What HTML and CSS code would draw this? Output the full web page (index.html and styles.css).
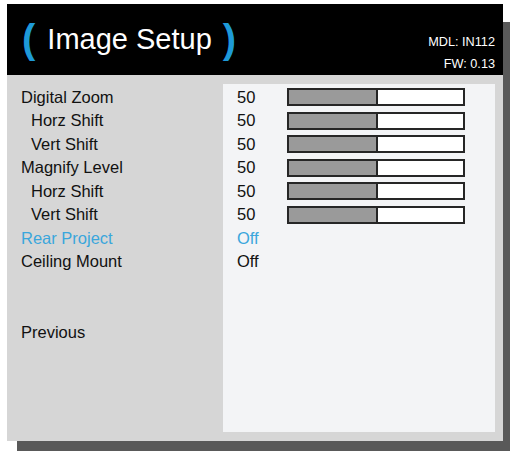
FILE: index.html
```html
<!DOCTYPE html>
<html lang="en">
<head>
  <meta charset="UTF-8">
  <title>Image Setup</title>
  <link rel="stylesheet" href="styles.css">
</head>
<body>
  <div class="osd">
    <!-- header -->
    <div class="header">
      <div class="title">
        <span class="paren">(</span>
        <span class="title-text">Image Setup</span>
        <span class="paren">)</span>
      </div>
      <div class="info">
        <div>MDL: IN112</div>
        <div>FW: 0.13</div>
      </div>
    </div>

    <!-- menu -->
    <div class="menu">
      <div class="labels">
        <div class="row">Digital Zoom</div>
        <div class="row sub">Horz Shift</div>
        <div class="row sub">Vert Shift</div>
        <div class="row">Magnify Level</div>
        <div class="row sub">Horz Shift</div>
        <div class="row sub">Vert Shift</div>
        <div class="row active">Rear Project</div>
        <div class="row">Ceiling Mount</div>
        <div class="row"></div>
        <div class="row"></div>
        <div class="row">Previous</div>
      </div>
      <div class="values">
        <div class="row"><span class="num">50</span><div class="bar"><div class="fill" style="width: 50%"></div></div></div>
        <div class="row"><span class="num">50</span><div class="bar"><div class="fill" style="width: 50%"></div></div></div>
        <div class="row"><span class="num">50</span><div class="bar"><div class="fill" style="width: 50%"></div></div></div>
        <div class="row"><span class="num">50</span><div class="bar"><div class="fill" style="width: 50%"></div></div></div>
        <div class="row"><span class="num">50</span><div class="bar"><div class="fill" style="width: 50%"></div></div></div>
        <div class="row"><span class="num">50</span><div class="bar"><div class="fill" style="width: 50%"></div></div></div>
        <div class="row active"><span class="num">Off</span></div>
        <div class="row"><span class="num">Off</span></div>
      </div>
    </div>
  </div>
</body>
</html>
```

FILE: styles.css
```css
html,
body {
  margin: 0;
  background: #ffffff;
}

body {
  padding: 4px 0 14px 7px;
  font-family: 'Liberation Sans', Arial, sans-serif;
  color: #111111;
}

.osd {
  position: relative;
  z-index: 0;
  width: 496px;
}

/* drop shadow behind the panel */
.osd::before {
  content: '';
  position: absolute;
  left: 10px;
  top: 18px;
  right: -7px;
  bottom: -10px;
  background: #595959;
  z-index: -1;
}

.header {
  display: flex;
  justify-content: space-between;
  height: 71px;
  background: #000000;
  color: #ffffff;
}

.title {
  display: flex;
  align-items: center;
  padding-left: 15px;
}

.paren {
  color: #1e9ad8;
  font-size: 40px;
  font-weight: bold;
  line-height: 1;
  padding-bottom: 2px;
}

.title-text {
  font-size: 29px;
  margin: 0 11px 0 12px;
}

.info {
  padding: 27px 8px 0 0;
  font-size: 12.7px;
  line-height: 22px;
  text-align: right;
}

.menu {
  display: flex;
  height: 348px;
  padding: 9px 8px 9px 0;
  background: #d6d6d6;
}

.labels {
  width: 202px;
  padding: 1.5px 0 0 14px;
}

.values {
  flex: 1;
  padding: 1.5px 0 0 14px;
  background: #f3f4f6;
}

.row {
  display: flex;
  align-items: center;
  height: 23.5px;
  font-size: 16.5px;
}

.sub {
  padding-left: 10px;
}

.active {
  color: #3aa6dc;
}

.num {
  width: 50px;
}

.bar {
  display: flex;
  width: 174px;
  height: 14px;
  border: 2px solid #262626;
  background: #ffffff;
}

.fill {
  background: #9a9a9a;
  border-right: 2px solid #262626;
}
```
